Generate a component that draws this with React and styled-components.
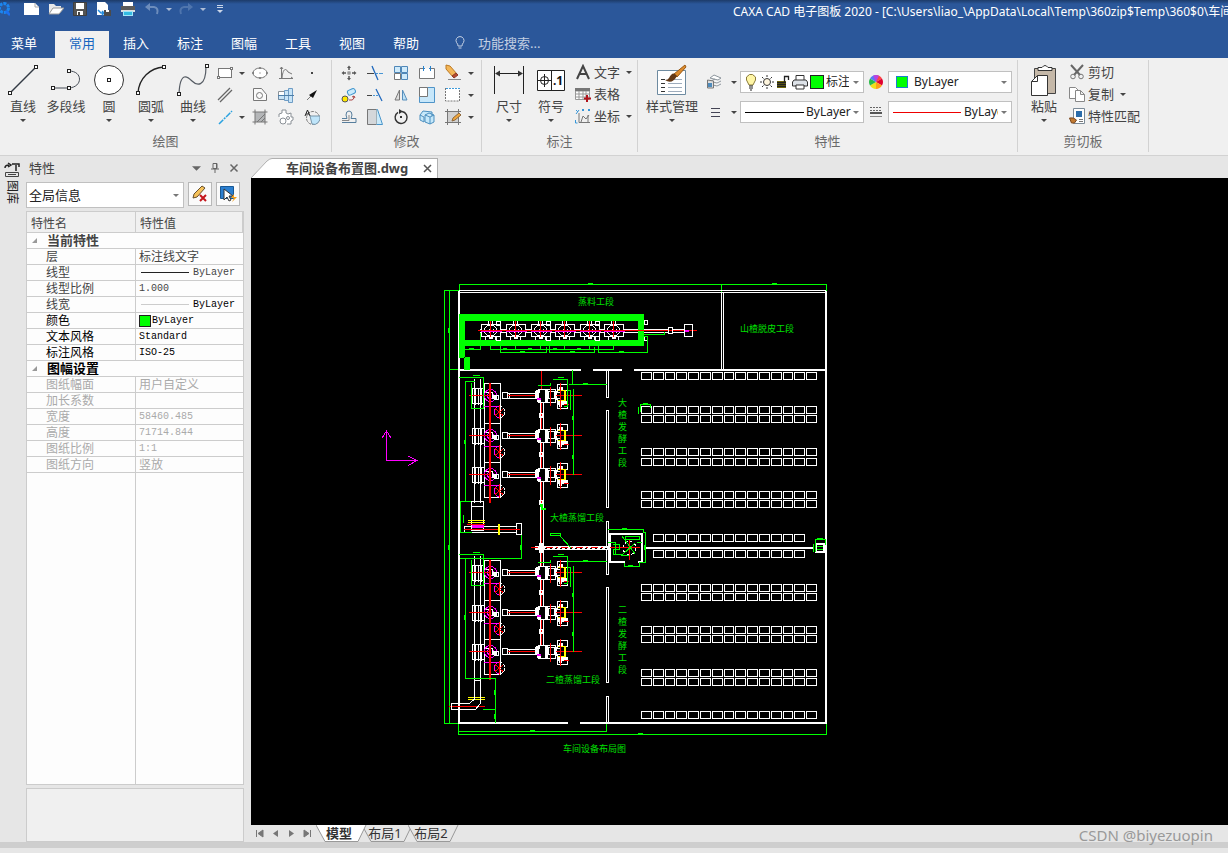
import React from 'react'
import styled, { createGlobalStyle, css } from 'styled-components'

const ui = '"Noto Sans", "Noto Sans CJK SC", sans-serif'
const theme = {
  blue: '#2b579a',
  ribbon: '#f0f0f0',
  chrome: '#e6e6e6',
  line: '#cccccc',
  text: '#444444',
  green: '#00ff00',
  magenta: '#ff00ff'
}

const GlobalStyle = createGlobalStyle`
  * {
    box-sizing: border-box;
  }
  body {
    margin: 0;
    font-family: ${ui};
    font-size: 13px;
    line-height: 16px;
    color: ${theme.text};
    background: ${theme.chrome};
  }
  button, input, select {
    font: inherit;
    color: inherit;
    border: 0;
    padding: 0;
    margin: 0;
    background: transparent;
    border-radius: 0;
  }
  svg {
    display: block;
    flex: none;
  }
`

const Shell = styled.div`
  display: flex;
  flex-direction: column;
  height: 100vh;
  overflow: hidden;
`

/* ---------- title bar and menu ---------- */

const TitleBar = styled.header`
  display: flex;
  justify-content: space-between;
  height: 31px;
  color: #fff;
  overflow: hidden;
  background: linear-gradient(#1d3b69, ${theme.blue} 4px);
`

const QuickBar = styled.div`
  display: flex;
  align-items: center;
  height: 18px;
`

const QuickButton = styled.button`
  display: flex;
  justify-content: center;
  width: ${({ $narrow }) => ($narrow ? 10 : 24)}px;
`

const QuickGap = styled.span`
  width: 10px;
`

const WindowTitle = styled.div`
  flex: 0 0 495px;
  min-width: 0;
  font-size: 12px;
  line-height: 24px;
  white-space: nowrap;
  overflow: hidden;
`

const MenuBar = styled.nav`
  display: flex;
  height: 27px;
  background: ${theme.blue};
  color: #fff;
`

const MenuTab = styled.button`
  width: 54px;
  height: 27px;
  padding-bottom: 4px;
  ${({ $first }) =>
    $first &&
    css`
      width: 48px;
      margin-right: 7px;
    `};
  ${({ $active }) =>
    $active &&
    css`
      color: #1565c0;
      background: ${theme.ribbon};
    `};
`

const Search = styled.label`
  display: flex;
  align-items: center;
  gap: 10px;
  margin-left: 19px;
  padding-bottom: 4px;
`

const SearchInput = styled.input`
  width: 120px;
  outline: none;
  &::placeholder {
    color: #c3cfe2;
    opacity: 1;
  }
`

/* ---------- ribbon ---------- */

const Ribbon = styled.section`
  display: flex;
  height: 98px;
  background: ${theme.ribbon};
  border-bottom: 1px solid #d2d2d2;
`

const Group = styled.div`
  display: flex;
  flex-direction: column;
  justify-content: space-between;
  flex: none;
  width: ${({ $width }) => $width}px;
  margin: 2px 0 3px;
  padding-top: 2px;
  border-right: 1px solid #d2d2d2;
`

const GroupBody = styled.div`
  display: flex;
  padding-left: ${({ $indent }) => $indent || 0}px;
`

const GroupName = styled.div`
  height: 20px;
  line-height: 18px;
  text-align: center;
  color: #6a6a6a;
`

const BigButton = styled.button`
  display: flex;
  flex-direction: column;
  align-items: center;
  width: ${({ $width }) => $width || 42}px;
  height: 64px;
  white-space: nowrap;
`

const BigLabel = styled.span`
  height: 21px;
  line-height: 17px;
`

const IconSlot = styled.span`
  display: flex;
  align-items: center;
  height: 36px;
`

const ToolGrid = styled.div`
  display: grid;
  grid-template-columns: ${({ $columns }) => $columns};
  grid-auto-rows: 22px;
  justify-items: center;
  align-items: center;
`

const ToolButton = styled.button`
  display: flex;
`

const RowButton = styled.button`
  display: flex;
  align-items: center;
  gap: 3px;
  height: 22px;
  padding-bottom: 2px;
  white-space: nowrap;
`

const Stack = styled.div`
  display: flex;
  flex-direction: column;
  align-items: flex-start;
  padding-left: ${({ $indent }) => $indent || 0}px;
`

const ComboGrid = styled.div`
  display: grid;
  grid-template-columns: 28px 12px 124px 24px 124px;
  grid-auto-rows: 22px;
  gap: 8px 0;
  justify-items: center;
  align-items: center;
  padding-top: 9px;
`

const Combo = styled.label`
  display: flex;
  align-items: center;
  gap: ${({ $gap }) => $gap || 0}px;
  width: 100%;
  height: ${({ $tall }) => ($tall ? 26 : 22)}px;
  padding: 0 4px 0 ${({ $tall }) => ($tall ? 2 : 4)}px;
  background: #fff;
  border: 1px solid #c0c0c0;
  color: #222;
  font-size: ${({ $tall }) => ($tall ? 13 : 12)}px;
`

const Select = styled.select`
  appearance: none;
  flex: 1;
  min-width: 0;
  outline: none;
  overflow: hidden;
  text-overflow: clip;
  padding-left: ${({ $pad }) => $pad || 0}px;
`

/* ---------- work area ---------- */

const Work = styled.main`
  display: flex;
  flex: 1;
  min-height: 0;
`

const SideDock = styled.aside`
  flex: 0 0 25px;
  padding: 6px 0 0 4px;
`

const DockTab = styled.button`
  display: flex;
  flex-direction: column;
  align-items: center;
  gap: 2px;
  width: 16px;
  color: #222;
  font-size: 12px;
  line-height: 16px;
`

const Sideways = styled.span`
  writing-mode: vertical-rl;
  text-orientation: sideways;
`

const Panel = styled.section`
  display: flex;
  flex-direction: column;
  flex: 0 0 219px;
`

const PanelTitle = styled.div`
  display: flex;
  align-items: center;
  height: 24px;
  padding: 0 5px 0 4px;
  gap: 9px;
`

const PanelName = styled.h2`
  flex: 1;
  margin: 0;
  font-size: 13px;
  font-weight: 400;
`

const PanelTools = styled.div`
  display: flex;
  gap: 4px;
  padding: 2px 4px 3px 1px;
`

const SquareButton = styled.button`
  display: flex;
  align-items: center;
  justify-content: center;
  flex: 0 0 24px;
  height: 24px;
  background: #fafafa;
  border: 1px solid #b8b8b8;
`

const Sheet = styled.div`
  flex: 1;
  margin-left: 1px;
  border: 1px solid ${theme.line};
  background: linear-gradient(${theme.line}, ${theme.line}) 108px 0 / 1px 100% no-repeat #fdfdfd;
`

const PropTable = styled.table`
  width: 100%;
  table-layout: fixed;
  border-collapse: separate;
  border-spacing: 0;
  font-family: ${ui};
  font-size: 12px;
  line-height: 15px;
`

const HeadCell = styled.th`
  height: 21px;
  width: ${({ $width }) => $width || 'auto'};
  padding: 2px 4px 0;
  text-align: left;
  font-weight: 400;
  background: ${theme.ribbon};
  border: solid ${theme.line};
  border-width: 0 1px 1px 0;
`

const NameCell = styled.th`
  height: 16px;
  padding: 0 0 0 19px;
  text-align: left;
  font-weight: 400;
  color: ${({ $color }) => $color};
  border: solid ${theme.line};
  border-width: 0 1px 1px 0;
`

const ValueCell = styled.td`
  height: 16px;
  padding: 0 0 0 3px;
  color: ${({ $color }) => $color};
  border-bottom: 1px solid ${theme.line};
  ${({ $latin }) =>
    $latin &&
    css`
      font-family: 'Liberation Mono', monospace;
      font-size: 10px;
    `};
`

const Value = styled.div`
  display: flex;
  align-items: center;
  gap: ${({ $gap }) => $gap || 0}px;
  height: 15px;
`

const SectionCell = styled.th`
  height: 16px;
  padding: 0;
  background: #fdfdfd;
  color: ${({ $color }) => $color};
  border-bottom: 1px solid ${theme.line};
`

const SectionTitle = styled.div`
  display: flex;
  align-items: center;
  gap: 10px;
  height: 15px;
  padding-left: 5px;
  font-size: 13px;
`

const Swatch = styled.span`
  flex: none;
  width: ${({ $size }) => $size}px;
  height: ${({ $size }) => $size}px;
  background: ${theme.green};
  border: 1px solid ${({ $edge }) => $edge || '#222'};
`

const Hint = styled.div`
  flex: 0 0 54px;
  margin: 3px 0 0 1px;
  border: 1px solid ${theme.line};
  background: ${theme.ribbon};
`

const Viewer = styled.section`
  display: flex;
  flex-direction: column;
  flex: 1;
  min-width: 0;
  margin-left: 7px;
`

const FileTabs = styled.div`
  display: flex;
  align-items: flex-end;
  flex: 0 0 22px;
`

const FileTab = styled.div`
  display: flex;
  align-items: center;
  gap: 15px;
  height: 20px;
  padding: 0 5px 0 14px;
  background: #fff;
  border: solid #b0b0b0;
  border-width: 1px 1px 0 0;
  font-weight: 700;
  line-height: 17px;
  white-space: nowrap;
`

const Canvas = styled.svg`
  flex: 1;
  width: 100%;
  min-height: 0;
  background: #000;
`

const SheetTabs = styled.div`
  display: flex;
  flex: 0 0 17px;
`

const SheetNav = styled.div`
  display: flex;
  width: 65px;
`

const NavButton = styled.button`
  display: flex;
  align-items: center;
  justify-content: center;
  width: 16px;
`

const SheetTab = styled.button`
  position: relative;
  width: 46px;
  height: 17px;
  line-height: 15px;
  color: #333;
  white-space: nowrap;
  z-index: ${({ $active }) => ($active ? 1 : 0)};
  font-weight: ${({ $active }) => ($active ? 700 : 400)};
`

const TabShape = styled.svg`
  position: absolute;
  left: 0;
  top: 0;
  z-index: -1;
`

const Footer = styled.footer`
  position: relative;
  flex: 0 0 11px;
  background: linear-gradient(#cecece 6px, ${theme.chrome} 6px);
`

const Watermark = styled.div`
  position: absolute;
  right: 15px;
  bottom: 8px;
  font-size: 15px;
  line-height: 20px;
  color: #999;
`

/* ---------- icons ---------- */

const Icon = ({ size = 18, width, children }) => (
  <svg
    width={width || size}
    height={size}
    viewBox={`0 0 ${width || size} ${size}`}
    fill="none"
    stroke="#777"
    aria-hidden="true"
  >
    {children}
  </svg>
)

const Down = ({ fill = '#444', big }) => (
  <svg width={big ? 9 : 6} height={big ? 5 : 3} viewBox="0 0 6 3" aria-hidden="true">
    <path d="M0 0h6l-3 3z" fill={fill} />
  </svg>
)

const Node = ({ x, y }) => (
  <rect x={x - 1.5} y={y - 1.5} width="3" height="3" fill="#fff" stroke="#222" />
)

const icons = {
  line: (
    <Icon size={34}>
      <path d="M4 30L30 4" stroke="#333a44" strokeWidth="1.5" />
      <Node x={4} y={30} />
      <Node x={30} y={4} />
    </Icon>
  ),
  polyline: (
    <Icon size={34}>
      <path d="M4 25h16c14-1 14-17 0-17" stroke="#444b55" />
      <Node x={4} y={25} />
      <Node x={20} y={25} />
      <Node x={20} y={8} />
    </Icon>
  ),
  circle: (
    <Icon size={34}>
      <circle cx="17" cy="17" r="14.5" fill="#fff" stroke="#333" />
      <Node x={17} y={17} />
    </Icon>
  ),
  arc: (
    <Icon size={34}>
      <path d="M4 30C5 15 16 5 30 4" stroke="#222" strokeWidth="1.3" />
      <Node x={4} y={30} />
      <Node x={30} y={4} />
    </Icon>
  ),
  curve: (
    <Icon size={34}>
      <path d="M3 31C4 7 12 14 16 18s14 8 14-15" stroke="#555b63" strokeWidth="1.2" />
      <Node x={3} y={31} />
      <Node x={31} y={3} />
    </Icon>
  ),
  rect: (
    <Icon size={16}>
      <rect x="1.5" y="3.5" width="13" height="9" fill="#fff" />
      <rect x=".5" y="11.5" width="2" height="2" fill="#fff" />
      <rect x="13.5" y="2.5" width="2" height="2" fill="#fff" />
    </Icon>
  ),
  ellipse: (
    <Icon size={16}>
      <ellipse cx="8" cy="8" rx="7" ry="5" fill="#fff" />
      <path d="M7.5 8h1M1 7v2M15 7v2M7 3h2M7 13h2" stroke="#555" />
    </Icon>
  ),
  formula: (
    <Icon size={16}>
      <path d="M3.500 2v12M1 13.500h14M2 4l1.500-2L5 4M13 12l2 1.500" />
      <path d="M4 13C5 3 8 3 10 7t4 2" />
    </Icon>
  ),
  point: (
    <Icon size={16}>
      <path d="M7 8h2" stroke="#444" strokeWidth="2" />
    </Icon>
  ),
  parallel: (
    <Icon size={16}>
      <path d="M1 13L13 1M3 15L15 3" stroke="#666" strokeWidth="1.300" />
    </Icon>
  ),
  hole: (
    <Icon size={16}>
      <path d="M1.500 1.500h8l5 6v6h-13z" fill="#fafafa" />
      <circle cx="7.500" cy="8.500" r="3" />
    </Icon>
  ),
  shaft: (
    <Icon size={16}>
      <path d="M.5 4.500h6v8h-6z" fill="#fff" stroke="#8a9299" />
      <path d="M.5 8.500h6v4h-6z" fill="#c7e4f7" stroke="#6e8ba5" />
      <path d="M6.500 3.500h4v10h-4zM10.500 1.500h4v14h-4z" fill="#c7e4f7" stroke="#6e9cc5" />
      <path d="M0 8.500h16" stroke="#4d7ea8" />
    </Icon>
  ),
  arrow: (
    <Icon size={16}>
      <path d="M3 13l4-4" stroke="#777" />
      <path d="M13 3L5 8l4 3z" fill="#111" stroke="none" />
    </Icon>
  ),
  centerline: (
    <Icon size={16}>
      <path d="M2 15L15 2" stroke="#2aa2e0" strokeWidth="1.500" strokeDasharray="6 1 2 1" />
    </Icon>
  ),
  hatch: (
    <Icon size={16}>
      <path d="M3 3h10v10H3z" fill="#b4b6b8" stroke="none" />
      <path d="M.5 3h15M.5 13h15M3 .5v15M13 .5v15M5 13l8-8M9 13l4-4" stroke="#777" />
    </Icon>
  ),
  gear: (
    <Icon size={16}>
      <path d="M1 8V5l3-1V1h4v3l2 1 3-1v4h2v3l-2 1v3h-4" fill="#fff" stroke="#8a9096" />
      <circle cx="5" cy="12" r="3" fill="#fff" stroke="#8a9096" />
      <circle cx="10" cy="9" r="1.500" stroke="#8a9096" />
    </Icon>
  ),
  block: (
    <Icon size={16}>
      <circle cx="9" cy="9" r="6.500" strokeDasharray="3 1" />
      <path d="M6 7h10a6 7 0 01-8 8z" fill="#bfe5fa" stroke="#7996aa" />
      <path d="M1 7l2.500-6L6 7M2 5h3" stroke="#222" />
    </Icon>
  ),
  move: (
    <Icon size={16}>
      <path d="M8 2v3M8 11v3M2 8h3M11 8h3" stroke="#555" strokeWidth="1.500" />
      <path d="M8 .5L10 3H6zM8 15.500L10 13H6zM.5 8L3 6v4zM15.500 8L13 6v4z" fill="#555" stroke="none" />
      <rect x="7" y="7" width="2" height="2" fill="#fff" />
    </Icon>
  ),
  trim: (
    <Icon size={16}>
      <path d="M0 8.500h7" stroke="#444" />
      <path d="M9 8.500h2M12 8.500h4" stroke="#4896d4" />
      <path d="M5 1l6 14" stroke="#1f68bd" strokeWidth="1.300" />
    </Icon>
  ),
  array: (
    <Icon size={16}>
      <path d="M1.500 1.500h6v6h-6zM8.500 1.500h6v6h-6zM8.500 8.500h6v6h-6z" fill="#cfeafa" stroke="#4f87b8" />
      <path d="M1.500 8.500h6v6h-6z" fill="#fff" stroke="#777" />
    </Icon>
  ),
  breakAt: (
    <Icon size={16}>
      <path d="M4 3.500H.5v10h15v-10H12" fill="#fff" />
      <path d="M4.500 1v5M11.500 1v5M4 3.500h2M12 3.500h-2" stroke="#2882cc" />
    </Icon>
  ),
  erase: (
    <Icon size={18}>
      <path d="M2 1l4 1 7 8-4 3-7-8z" fill="#f3b657" stroke="#bd7a25" />
      <path d="M12 9l2 2-4 3-2-2z" fill="#b64a2e" stroke="#8e3b28" />
      <path d="M4 15.500h13" stroke="#888" />
    </Icon>
  ),
  copyObj: (
    <Icon size={16}>
      <circle cx="4" cy="12" r="3" fill="#ffe800" stroke="#555" />
      <rect x="6.500" y="2.500" width="8" height="5" rx="2" fill="#c9eafb" stroke="#3f95cd" transform="rotate(-25 10 5)" />
      <path d="M8 13h3q2 0 2-4M11 10l2-1 1 2" stroke="#a44" />
    </Icon>
  ),
  extend: (
    <Icon size={16}>
      <path d="M0 8.500h5" stroke="#444" />
      <path d="M6 8.500h5" stroke="#4896d4" strokeDasharray="2 1" />
      <path d="M9 2l6 12" stroke="#1f68bd" strokeWidth="1.300" />
    </Icon>
  ),
  mirror: (
    <Icon size={16}>
      <path d="M6.500 3v10H2z" fill="#ddd" stroke="#777" />
      <path d="M9.500 3v10H14z" fill="#bee2f7" stroke="#568ebc" />
    </Icon>
  ),
  scale: (
    <Icon size={16}>
      <path d="M.5.5h15v15H.5z" fill="#c7e7fa" stroke="#4f94c8" />
      <path d="M.5.5h8v9h-8z" fill="#fff" stroke="#777" />
    </Icon>
  ),
  stretch: (
    <Icon size={16}>
      <path d="M.5 1v13h14V1" fill="#fff" stroke="#777" strokeDasharray="2 1" />
      <path d="M1 1.500h14" stroke="#3e9bda" strokeDasharray="2 1" />
    </Icon>
  ),
  offset: (
    <Icon size={16}>
      <path d="M1 9.500h5L5 6q0-4 3-4t3 4l-1 3.500h5v4H1" stroke="#577e9d" />
      <path d="M1 11.500h7V6" stroke="#888" />
    </Icon>
  ),
  chamfer: (
    <Icon size={16}>
      <path d="M.5.5h9v15h-9z" fill="#d4d7da" />
      <path d="M9.500.5h1l5 15h-6" fill="#cbeafa" stroke="#4995ca" />
    </Icon>
  ),
  rotate: (
    <Icon size={16}>
      <path d="M9 2.500a6 6 0 11-4 .8" stroke="#333" strokeWidth="1.400" />
      <path d="M6 0l4 2.500L6 5zM7 7h2v2H7z" fill="#333" stroke="none" />
    </Icon>
  ),
  explode: (
    <Icon size={16}>
      <path d="M1 6l3-4 9 1v4M1 6v5l4 2V8zM6 6l4-2 5 2v7l-4 2-5-2zM6 6l5 2 4-2M11 8v7" fill="#c6e8fa" stroke="#4b8fbf" />
    </Icon>
  ),
  editHatch: (
    <Icon size={16}>
      <path d="M2.500 2.500h11v11h-11z" fill="#d0d0d0" />
      <path d="M0 2.500h16M0 13.500h16M2.500 0v16M13.500 0v16" />
      <path d="M7 12l1-3 6-5 2 2-6 5z" fill="#f0a63b" stroke="#8d673b" />
    </Icon>
  ),
  dimension: (
    <Icon size={34}>
      <path d="M2.500 3v28M31.500 3v28M4 10.500h26" stroke="#222" />
      <path d="M3 10.500l5-3v6zM31 10.500l-5-3v6z" fill="#333" stroke="none" />
    </Icon>
  ),
  symbol: (
    <Icon size={34}>
      <path d="M3.500 7.500h27v20h-27zM17.500 7v20" fill="#fff" stroke="#222" />
      <circle cx="10.500" cy="17.500" r="4" stroke="#222" />
      <path d="M4 17.500h13M10.500 11v13" stroke="#222" />
      <text x="19" y="22" fontSize="12" fontWeight="700" fill="#111" stroke="none">.1</text>
    </Icon>
  ),
  letterA: (
    <Icon size={16}>
      <path d="M2 15L8 2l6 13M4.500 10h7" stroke="#444" strokeWidth="2" />
    </Icon>
  ),
  table: (
    <Icon size={16}>
      <path d="M.5 2.500h14v11H.5zM.5 5h14M.5 8h14M.5 11h14M4 4v9M8 4v9M11 4v9" fill="#fff" stroke="#999" />
      <path d="M0 2h15v3H0z" fill="#777" stroke="none" />
      <path d="M12 9v7M9 12.500h7" stroke="#b0121b" strokeWidth="2" />
    </Icon>
  ),
  coord: (
    <Icon size={16}>
      <path d="M4 5v9.500h11M6 14l2-6 3 3 3-4M13 14V7" />
      <path d="M1 2l2 2M4 2L1 6M7 1l2 2M9 1L7 3M13 1l2 2M15 1l-2 2M.5 12v3h2" stroke="#3796d8" />
    </Icon>
  ),
  style: (
    <Icon size={36}>
      <path d="M3.500 8.500h28v24h-28z" fill="#fff" stroke="#6d8aa0" />
      <path d="M7 17.500h4M7 21.500h4M7 25.500h4M7 29.500h4" stroke="#333" />
      <path d="M14 17.500h14M14 21.500h14M14 25.500h14M14 29.500h14" stroke="#9eacbc" />
      <path d="M31 3L20 12l3 3 9-10z" fill="#dc8b2d" stroke="#9a5a15" />
      <path d="M21 12q-3-2-6 4-1 2-4 2 7 5 12-4z" fill="#643a18" stroke="none" />
    </Icon>
  ),
  layers: (
    <Icon size={18}>
      <path d="M5 5l4-3 7 3-3 2zM6 8l4-2M8 9l4 1 4-2M8 12l4 1 4-2" fill="#fff" stroke="#8d969d" />
      <path d="M2.500 7v8h6V8z" fill="#ddd" />
      <path d="M3 10h4v4H3z" fill="#4f8bbb" stroke="none" />
    </Icon>
  ),
  lines: (
    <Icon size={18}>
      <path d="M6 5.500h9M6 9.500h9M6 13.500h9" stroke="#445" />
    </Icon>
  ),
  bulb: (
    <Icon size={18} width={12}>
      <path d="M4 12L1.500 7V4l3-2.500h3l3 2.500v3L8 12z" fill="#fff6a6" stroke="#8a7a3a" />
      <path d="M4 13h4M4 15h4M5 17h2" stroke="#222" />
    </Icon>
  ),
  sun: (
    <Icon size={16}>
      <circle cx="8" cy="8" r="3.500" fill="#fff6de" stroke="#333" />
      <path d="M8 1v2M8 13v2M1 8h2M13 8h2M3 3l1.500 1.500M11.500 11.500L13 13M13 3l-1.500 1.500M4.500 11.500L3 13" stroke="#333" />
    </Icon>
  ),
  lock: (
    <Icon size={16} width={13}>
      <path d="M0 7h9v7H0z" fill="#8a8000" stroke="none" />
      <path d="M7.500 8V2.500h4V6M0 8.500h9M0 10.500h9M0 12.500h9" stroke="#222" strokeWidth="1.300" />
    </Icon>
  ),
  print: (
    <Icon size={16}>
      <path d="M4 6V1.500h8V6" fill="#fff" stroke="#333" />
      <path d="M2 6h12l1.500 2v4H.5V8z" fill="#dde2e8" stroke="#333" />
      <path d="M4 11h8v4H4z" fill="#fff" stroke="#333" />
    </Icon>
  ),
  wheel: (
    <Icon size={16}>
      <g stroke="none">
        <path d="M8 8V1a7 7 0 016 3.500z" fill="#f44" />
        <path d="M8 8l6-3.500a7 7 0 010 7z" fill="#e00030" />
        <path d="M8 8l6 3.500A7 7 0 018 15z" fill="#ff9e16" />
        <path d="M8 8v7a7 7 0 01-6-3.500z" fill="#f0df1b" />
        <path d="M8 8l-6 3.500a7 7 0 010-7z" fill="#28ba48" />
        <path d="M8 8L2 4.500A7 7 0 018 1z" fill="#557df5" />
        <path d="M8 8L5 1.700A7 7 0 0111 1.700z" fill="#b943e0" />
      </g>
    </Icon>
  ),
  weights: (
    <Icon size={16}>
      <path d="M2 3.500h12M2 6.500h12" stroke="#666" strokeDasharray="2 1" />
      <path d="M2 9h12" stroke="#555" strokeWidth="2" />
      <path d="M2 12.500h12" stroke="#888" />
    </Icon>
  ),
  paste: (
    <Icon size={34} width={30}>
      <path d="M5.500 5.500h21v25h-21z" fill="#c5b8a8" stroke="#444" />
      <path d="M9 7.500V4.500h4q3-4 6 0h4v3z" fill="#fff" stroke="#333" />
      <path d="M2.500 18.500l6-6h10v20h-16z" fill="#fff" stroke="#333" />
      <path d="M8.500 12.500v6h-6" stroke="#333" />
    </Icon>
  ),
  cut: (
    <Icon size={16}>
      <path d="M2 1l9 10M14 1L5 11" stroke="#666" strokeWidth="2" />
      <circle cx="4" cy="12.500" r="2.300" />
      <circle cx="12" cy="12.500" r="2.300" />
    </Icon>
  ),
  copy: (
    <Icon size={16}>
      <path d="M.5 1.500h6l3 3v8h-9z" fill="#fff" stroke="#888" />
      <path d="M6.500 4.500h5l4 4v7h-9zM11.500 4.500v4h4" fill="#fff" stroke="#888" />
    </Icon>
  ),
  match: (
    <Icon size={16}>
      <path d="M4.500.5h11v15h-11z" fill="#fff" stroke="#7c8b98" />
      <path d="M7 3h6v6H7z" fill="#2c6dab" stroke="none" />
      <path d="M10 11.500h4M10 13.500h4" />
      <path d="M.5 10q4-1 7 2l-2 3h-3z" fill="#c27b32" stroke="#7b4820" />
    </Icon>
  )
}

const QuickIcons = () => (
  <>
    <QuickButton aria-label="CAXA" $narrow>
      <Icon size={16} width={10}>
        <circle cx="4" cy="7" r="4.500" stroke="#1b86f0" strokeWidth="3" strokeDasharray="3 1" />
        <path d="M6 10l4 4" stroke="#1d6ff0" strokeWidth="2.500" />
      </Icon>
    </QuickButton>
    <QuickGap />
    <QuickButton aria-label="新建">
      <Icon size={16}>
        <path d="M0 2h11l4 4v8H0z" fill="#fff" stroke="none" />
        <path d="M11 2v4h4" stroke="#aaa" />
      </Icon>
    </QuickButton>
    <QuickButton aria-label="打开">
      <Icon size={16}>
        <path d="M1 3h5l2 2h5v3L4 13H1z" fill="#e9e9e9" stroke="none" />
        <path d="M1 13l4-6h11l-5 6z" fill="#fff" stroke="#999" />
      </Icon>
    </QuickButton>
    <QuickButton aria-label="保存">
      <Icon size={16}>
        <path d="M1.500 1.500h13v13h-13z" fill="#545454" stroke="#3f3f3f" />
        <path d="M4 2h8v6H4zM5 10h6v4H5z" fill="#fff" stroke="none" />
        <path d="M6 11h2v3H6z" fill="#444" stroke="none" />
      </Icon>
    </QuickButton>
    <QuickButton aria-label="另存为">
      <Icon size={16}>
        <path d="M1 1h8l3 3v10H1z" fill="#fff" stroke="none" />
        <path d="M2 9l3 3h3M6 10l2 2-2 2" stroke="#268de0" strokeWidth="1.500" />
        <path d="M8 9h7v6H8z" fill="#4b4b4b" stroke="none" />
        <path d="M10 9h3v2h-3z" fill="#fff" stroke="none" />
      </Icon>
    </QuickButton>
    <QuickButton aria-label="打印">
      <Icon size={16}>
        <path d="M3 1h10v5H3z" fill="#fff" stroke="none" />
        <path d="M1 5h14v6H1z" fill="#5a5a5a" stroke="none" />
        <path d="M1 9h14v2H1z" fill="#ddd" stroke="none" />
        <path d="M3 10h10v5H3z" fill="#a2e4f7" stroke="none" />
        <path d="M4 11h8v3H4z" fill="#32bae2" stroke="none" />
      </Icon>
    </QuickButton>
    <QuickButton aria-label="撤销">
      <Icon size={16}>
        <path d="M3 6h7q5 1 3 7" stroke="#6d8dbc" strokeWidth="2" />
        <path d="M1 6l5-4v8z" fill="#6d8dbc" stroke="none" />
      </Icon>
    </QuickButton>
    <QuickButton aria-label="撤销列表" $narrow>
      <Down fill="#aebdd6" />
    </QuickButton>
    <QuickButton aria-label="重做">
      <Icon size={16}>
        <path d="M13 6H6Q1 7 3 13" stroke="#4f75ad" strokeWidth="2" />
        <path d="M15 6l-5-4v8z" fill="#4f75ad" stroke="none" />
      </Icon>
    </QuickButton>
    <QuickButton aria-label="重做列表" $narrow>
      <Down fill="#aebdd6" />
    </QuickButton>
    <QuickButton aria-label="自定义">
      <Icon size={8}>
        <path d="M1 .5h6M1 2.500h6" stroke="#cbd6e8" />
        <path d="M1 5h6L4 8z" fill="#cbd6e8" stroke="none" />
      </Icon>
    </QuickButton>
  </>
)

/* ---------- ribbon content ---------- */

const menus = ['菜单', '常用', '插入', '标注', '图幅', '工具', '视图', '帮助']

const drawTools = [
  ['rect', '矩形'], 'more', ['ellipse', '椭圆'], ['formula', '公式曲线'], ['point', '点'],
  ['parallel', '平行线'], null, ['hole', '孔'], ['shaft', '轴'], ['arrow', '箭头'],
  ['centerline', '中心线'], 'more', ['hatch', '剖面线'], ['gear', '齿轮'], ['block', '块']
]

const editTools = [
  ['move', '平移'], ['trim', '裁剪'], ['array', '阵列'], ['breakAt', '打断'], ['erase', '删除'], 'more',
  ['copyObj', '平移复制'], ['extend', '延伸'], ['mirror', '镜像'], ['scale', '缩放'], ['stretch', '拉伸'], 'more',
  ['offset', '等距线'], ['chamfer', '过渡'], ['rotate', '旋转'], ['explode', '分解'], ['editHatch', '编辑填充'], 'more'
]

const Big = ({ icon, label, width, plain }) => (
  <BigButton $width={width}>
    <IconSlot>{icons[icon]}</IconSlot>
    <BigLabel>{label}</BigLabel>
    {!plain && <Down />}
  </BigButton>
)

const Tools = ({ columns, items }) => (
  <ToolGrid $columns={columns}>
    {items.map((item, i) => {
      if (!item) return <span key={i} />
      if (item === 'more') {
        return (
          <ToolButton key={i} aria-label="更多">
            <Down />
          </ToolButton>
        )
      }
      return (
        <ToolButton key={i} aria-label={item[1]}>
          {icons[item[0]]}
        </ToolButton>
      )
    })}
  </ToolGrid>
)

const Row = ({ icon, label, more }) => (
  <RowButton>
    {icons[icon]}
    {label}
    {more && (
      <>
        <span />
        <Down />
      </>
    )}
  </RowButton>
)

const RibbonBar = () => (
  <Ribbon>
    <Group $width={332}>
      <GroupBody $indent={2}>
        <Big icon="line" label="直线" />
        <Big icon="polyline" label="多段线" width={44} plain />
        <Big icon="circle" label="圆" />
        <Big icon="arc" label="圆弧" />
        <Big icon="curve" label="曲线" />
        <Tools columns="22px 11px 26px 26px 26px" items={drawTools} />
      </GroupBody>
      <GroupName>绘图</GroupName>
    </Group>
    <Group $width={150}>
      <GroupBody $indent={4}>
        <Tools columns="repeat(5, 26px) 10px" items={editTools} />
      </GroupBody>
      <GroupName>修改</GroupName>
    </Group>
    <Group $width={156}>
      <GroupBody $indent={6}>
        <Big icon="dimension" label="尺寸" />
        <Big icon="symbol" label="符号" />
        <Stack $indent={3}>
          <Row icon="letterA" label="文字" more />
          <Row icon="table" label="表格" />
          <Row icon="coord" label="坐标" more />
        </Stack>
      </GroupBody>
      <GroupName>标注</GroupName>
    </Group>
    <Group $width={380}>
      <GroupBody $indent={6}>
        <Big icon="style" label="样式管理" width={56} />
        <ComboGrid>
          {icons.layers}
          <Down />
          <Combo $gap={2}>
            {icons.bulb}
            {icons.sun}
            {icons.lock}
            {icons.print}
            <Swatch $size={14} />
            <Select aria-label="图层">
              <option>标注线文字</option>
            </Select>
            <span />
            <Down fill="#777" />
          </Combo>
          {icons.wheel}
          <Combo $gap={3}>
            <span />
            <Swatch $size={12} $edge="#1a7fd0" />
            <Select aria-label="颜色" $pad={3}>
              <option>ByLayer</option>
            </Select>
            <Down fill="#777" />
          </Combo>
          {icons.lines}
          <Down />
          <Combo $gap={2}>
            <svg width="59" height="1">
              <path d="M0 .5h59" stroke="#000" />
            </svg>
            <Select aria-label="线型">
              <option>ByLayer</option>
            </Select>
            <Down fill="#777" />
          </Combo>
          {icons.weights}
          <Combo $gap={3}>
            <svg width="68" height="1">
              <path d="M0 .5h68" stroke="#e00" />
            </svg>
            <Select aria-label="线宽">
              <option>ByLayer</option>
            </Select>
            <Down fill="#777" />
          </Combo>
        </ComboGrid>
      </GroupBody>
      <GroupName>特性</GroupName>
    </Group>
    <Group $width={131}>
      <GroupBody $indent={5}>
        <Big icon="paste" label="粘贴" />
        <Stack $indent={4}>
          <Row icon="cut" label="剪切" />
          <Row icon="copy" label="复制" more />
          <Row icon="match" label="特性匹配" />
        </Stack>
      </GroupBody>
      <GroupName>剪切板</GroupName>
    </Group>
  </Ribbon>
)

/* ---------- property panel ---------- */

const properties = [
  {
    title: '当前特性',
    color: '#444',
    rows: [
      { name: '层', value: '标注线文字' },
      { name: '线型', value: 'ByLayer', line: '#222', latin: true },
      { name: '线型比例', value: '1.000', latin: true },
      { name: '线宽', value: 'ByLayer', line: '#ccc', valueColor: '#000', latin: true },
      { name: '颜色', value: 'ByLayer', swatch: true, color: '#000', latin: true },
      { name: '文本风格', value: 'Standard', color: '#000', latin: true },
      { name: '标注风格', value: 'ISO-25', color: '#000', latin: true }
    ]
  },
  {
    title: '图幅设置',
    color: '#000',
    rows: [
      { name: '图纸幅面', value: '用户自定义', color: '#aaa' },
      { name: '加长系数', value: '', color: '#aaa' },
      { name: '宽度', value: '58460.485', color: '#aaa', latin: true },
      { name: '高度', value: '71714.844', color: '#aaa', latin: true },
      { name: '图纸比例', value: '1:1', color: '#aaa', latin: true },
      { name: '图纸方向', value: '竖放', color: '#aaa' }
    ]
  }
]

const PropertyPanel = () => (
  <Panel>
    <PanelTitle>
      <PanelName>特性</PanelName>
      <Down fill="#666" big />
      <Icon size={12} width={10}>
        <path d="M3 1.500h4v5H3zM1 7h8M5 7v4M6.500 2v5" stroke="#666" />
      </Icon>
      <Icon size={10}>
        <path d="M1.500 1.500l7 7M8.500 1.500l-7 7" stroke="#666" strokeWidth="1.500" />
      </Icon>
    </PanelTitle>
    <PanelTools>
      <Combo $tall>
        <Select aria-label="选择对象">
          <option>全局信息</option>
        </Select>
        <Down fill="#777" />
      </Combo>
      <SquareButton aria-label="清除">
        <Icon size={18}>
          <path d="M2 13l1-4 8-8 3 2-8 9z" fill="#f6c25a" stroke="#66502d" />
          <path d="M9 10l6 6M15 10l-6 6" stroke="#c4161c" strokeWidth="2" />
        </Icon>
      </SquareButton>
      <SquareButton aria-label="快速选择">
        <Icon size={18}>
          <path d="M1.500 1.500h13v12h-13z" fill="#2b7fd0" stroke="#185894" />
          <path d="M5 4v11l3-3 2 4 2-1-2-4h4z" fill="#fff" stroke="#333" />
          <path d="M15 9l-3 4h3l-2 4 5-5h-3z" fill="#f6a11a" stroke="none" />
        </Icon>
      </SquareButton>
    </PanelTools>
    <Sheet>
      <PropTable>
        <thead>
          <tr>
            <HeadCell $width="109px">特性名</HeadCell>
            <HeadCell>特性值</HeadCell>
          </tr>
        </thead>
        {properties.map(section => (
          <tbody key={section.title}>
            <tr>
              <SectionCell colSpan={2} $color={section.color}>
                <SectionTitle>
                  <svg width="5" height="5">
                    <path d="M5 0v5H0z" fill="#999" />
                  </svg>
                  {section.title}
                </SectionTitle>
              </SectionCell>
            </tr>
            {section.rows.map(row => (
              <tr key={row.name}>
                <NameCell $color={row.color || theme.text}>{row.name}</NameCell>
                <ValueCell $color={row.valueColor || row.color || theme.text} $latin={row.latin}>
                  <Value $gap={row.line ? 4 : 1}>
                    {row.line && (
                      <svg width="50" height="1">
                        <path d="M2 .5h48" stroke={row.line} />
                      </svg>
                    )}
                    {row.swatch && <Swatch $size={12} />}
                    {row.value}
                  </Value>
                </ValueCell>
              </tr>
            ))}
          </tbody>
        ))}
      </PropTable>
    </Sheet>
    <Hint />
  </Panel>
)

/* ---------- floor plan ---------- */

const W = '#fff'
const G = theme.green
const R = '#ff0000'
const M = theme.magenta
const Y = '#ffff00'

const Stroke = ({ d, c = W, w = 1, dash }) => (
  <path d={d} stroke={c} strokeWidth={w} strokeDasharray={dash} fill="none" />
)

const Box = ({ x, y, w, h, c = W, fill = 'none', sw = 1 }) => (
  <rect x={x} y={y} width={w} height={h} stroke={c} strokeWidth={sw} fill={fill} />
)

const Note = ({ x, y, children }) => (
  <text x={x} y={y} fill="#00e000" fontSize="9" fontFamily="Noto Sans CJK SC, sans-serif">
    {children}
  </text>
)

const Column = ({ x, y, text }) =>
  text.split('').map((char, i) => (
    <Note key={i} x={x} y={y + i * 12}>
      {char}
    </Note>
  ))

const Cookers = () => (
  <>
    <path d="M459 314h185v32H459zM465 321v19h173v-19zM459 346h6v12h-6zM464 357h6v13h-6z" fill={G} fillRule="evenodd" />
    <Stroke d="M480 329.500h158M480 332.500h158" />
    {[490.5, 515.5, 540.5, 564.5, 589.5, 613.5].map((x, i) => (
      <g key={x}>
        <Box x={x - 9} y={324.5} w={19} h={12} fill="#000" />
        <Stroke d={`M${x - 3} 325.500h6l3 3v4l-3 3h-6l-3-3v-4zM${x - 2} 321v4h4v-4M${x - 5} 337v3M${x + 5} 337v3`} />
        <path d={`M${x - 2} 335h4v4h-4z`} fill={W} />
        <Stroke d={`M${x} 321v16`} c={R} />
        <Stroke d={`M${x - 10} 331h21`} c={M} w={2} />
        <path d={`M${x - 2} 329h1v1h-1zM${x + 2} 329h1v1h-1zM${x - 2} 332h1v1h-1zM${x + 2} 332h1v1h-1z`} fill={W} />
        {i % 2 === 0 && (
          <>
            <Box x={x + 6} y={321.5} w={4} h={4} />
            <Box x={x + 6} y={336.5} w={4} h={4} />
          </>
        )}
        <Stroke d={`M${x} 345v5`} c={G} />
      </g>
    ))}
    <Stroke d="M478 330.500h219" c={R} />
    <Stroke d="M644 329.500h24M644 332.500h24M673 329.500h11M673 332.500h11" />
    <Box x={668.5} y={327.5} w={4} h={6} />
    <Box x={684.5} y={324.5} w={8} h={12} />
    <Stroke d="M685 331h4" c={M} w={2} />
    <Box x={644.5} y={320.5} w={3} h={4} />
    <Box x={644.5} y={336.5} w={3} h={4} />
    <Stroke
      d="M465 349.500h15v-17M491 349.500h123M500 346v6.500h46v-6M549 346v6.500h45v-6M598 346v6.500h49.500v-16h-4M644 334.500h20v-3M469 348.500h5M503 348.500h4M528 348.500h4M553 348.500h4M577 348.500h4M520 351.500h5M570 351.500h5M619 351.500h5"
      c={G}
    />
  </>
)

const Still = ({ y }) => (
  <g>
    <Box x={472} y={y - 7} w={12} h={15} />
    <Stroke d={`M475.500 ${y - 8}v17M478.500 ${y - 8}v17M481.500 ${y - 8}v17M484 ${y - 4}h3M484 ${y + 4}h3`} />
    <circle cx="490.500" cy={y} r="6" stroke={M} fill="none" />
    <circle cx="490.500" cy={y} r="3" stroke={M} fill="none" />
    <Stroke d={`M486 ${y - 3}h6v3h6v4h-4`} />
    <path d={`M492 ${y}h5v3h-5z`} fill={W} />
    <Stroke d={`M484 ${y + 11}h16`} c={M} />
    <path d={`M499.500 ${y + 11}a5 5 0 000 11`} stroke={M} fill="none" />
    <path d={`M499.500 ${y + 11}a5 5 0 010 11`} stroke={W} fill="none" strokeDasharray="3 1" />
    <Stroke d={`M495 ${y + 13}l8 7M495 ${y + 20}l8-6M499.500 ${y + 9}v14`} c={R} />
    <Box x={502.5} y={y - 3} w={5} h={6} />
    <Stroke d={`M508 ${y - 2}h29M508 ${y + 3}h29M509.500 ${y - 3}v6`} />
    <Stroke d={`M469 ${y}h20M508 ${y}h31M555 ${y}h27`} c={R} />
    <Box x={538.5} y={y - 6} w={17} h={13} fill="#000" />
    <path d={`M536 ${y - 5.5}h4v3h-2v6h3v3h-4v-3h-2v-7zM545 ${y - 6.5}h3v14h-3z`} fill={W} />
    <Box x={548.5} y={y - 4} w={6} h={7} />
    <Stroke d={`M556 ${y - 3}l3-3M556 ${y + 3}l3 3`} />
    <Stroke d={`M550.500 ${y - 9}v19`} c={R} />
    <Box x={557.5} y={y - 11} w={10} h={6} />
    <Box x={557.5} y={y + 6} w={10} h={7} />
    <path d={`M559 ${y - 8.5}h4v4h-4zM558 ${y + 6.5}h10v3h-6v2h-3z`} fill={W} />
    <Stroke d={`M558 ${y - 5}h7v10h-7`} c={Y} />
    <Stroke d={`M565 ${y - 5.5}v11`} c={Y} w={2} />
    <Box x={556.5} y={y - 3} w={4} h={6} />
    <Stroke d={`M560.500 ${y - 13}v27M556 ${y}h6M564 ${y + 9}h5`} c={R} />
    <path d={`M537 ${y + 2.5}h4v2h-4z`} fill={M} />
  </g>
)

const Bank = ({ y }) => (
  <g>
    <Box x={484.5} y={y - 12} w={16} h={114} />
    <Stroke d={`M484 ${y + 28}h16M484 ${y + 67}h16`} />
    <Stroke d={`M474.500 ${y - 17}v124M480.500 ${y - 17}v124`} />
    <Still y={y} />
    <Still y={y + 40} />
    <Still y={y + 79} />
    <Stroke d={`M490 ${y - 13}v120`} c={R} w={2} />
    <Stroke
      d={`M459 ${y - 18}h24v31h-12v-26M473 ${y - 20}h7M538 ${y - 10}h12v-3M553 ${y - 16}h14v27h-3M558 ${y - 18}h6M569 ${y - 11}h38M583 ${y - 12}h5M567 ${y - 5}h3v19M573.500 ${y - 7}v86M572 ${y + 20}v4M572 ${y + 59}v4`}
      c={G}
    />
  </g>
)

const benchRows = [
  [372.5, 0, 15], [406.5, 0, 15], [415.5, 0, 15], [448.5, 0, 15], [458.5, 0, 15],
  [491.5, 0, 15], [500.5, 0, 15], [534.5, 1, 13], [550.5, 1, 13], [584.5, 0, 15],
  [593.5, 0, 15], [626.5, 0, 15], [635.5, 0, 15], [669.5, 0, 15], [678.5, 0, 15], [711.5, 0, 15]
]

const benchX = i => Math.round(i * 11.8) + 641.5

const Benches = () =>
  benchRows.map(([y, first, count]) => (
    <g key={y}>
      {Array.from({ length: count }, (_, i) => first + i).map(i => (
        <Box key={i} x={benchX(i)} y={y} w={benchX(i + 1) - benchX(i) - 2} h={7} />
      ))}
    </g>
  ))

const FloorPlan = () => (
  <Canvas role="img" aria-label="车间设备布局图">
    <g transform="translate(-251 -178)" shapeRendering="crispEdges">
      <Stroke d="M386.500 460.500v-29M382 438l4.500-7 4.500 7M386.500 460.500h30M408 456l9 4.500-9 5" c={M} />

      {/* outline dimensions */}
      <Stroke
        d="M459.500 291v-6.500h367v7M721.500 284v9M444.500 723.500v-433h14M449.500 290v433M444 723.500h14M458.500 723v11.500h368V722M458.500 731.500h148V723M588 283.500h5M772 283.500h5M530 730.500h5M638 733.500h5M448.500 328v5M448.500 545v5M449 369.500h10"
        c={G}
      />

      {/* walls */}
      <Stroke d="M459 290.500h367M459 292.500h367M721.500 292v77M723.500 292v77" />
      <Stroke d="M459 291v432M826 291v432M458 370h123M593 370h29M634 370h193M458 723h110M580 723h247" w={2} />
      <Box x={606.5} y={370.5} w={2} h={27} />
      <Box x={606.5} y={410.5} w={2} h={97} />
      <Box x={606.5} y={521.5} w={2} h={53} />
      <Box x={606.5} y={587.5} w={2} h={95} />
      <Box x={606.5} y={696.5} w={2} h={26} />

      <Cookers />
      <Benches />

      {/* main shaft */}
      <Stroke d="M540.500 396v256M543.500 396v256" />
      <Stroke d="M541.500 371v288" c={R} />
      <Bank y={395.5} />
      <Bank y={572.5} />
      {[415, 454, 502, 547, 592, 631].map(y => (
        <g key={y}>
          <rect x="539" y={y - 2} width="5" height="5" fill={W} />
          <rect x="541" y={y - 1} width="1" height="2" fill={R} />
        </g>
      ))}
      <path d="M540 504h3v4h3v2h-5z" fill={G} />

      {/* ducts on the left wall */}
      <Stroke d="M471.500 501.500h12v29h-12zM471 506.500h12M464.500 526.500h52v6h-52zM516.500 523.500h5v11h-5z" />
      <Stroke d="M464 529.500h56M467 524.500h18M449 706.500h36" c={R} />
      <Stroke d="M468 520.500h17M468 522.500h17M468 697.500h17M468 699.500h17" c={Y} />
      <Stroke d="M499 524v11" c={Y} w={2} />
      <path d="M472 525h12v3h-12z" fill={M} />
      <Stroke d="M474.500 679v20l-5 4.500h-18v6h24l5-6V679M474 680.500h6" />
      <Stroke
        d="M465.500 501V381.500h9M471 501.500h-10.500v31h11M463.500 515v8M521.500 535v23.500h-62M572.500 370v14M465.500 559v119.500h30V723M483 709.500h12M464.500 440v4M464.500 615v5M494.500 690v5M494.500 714v5M520.500 545v5M568 561.500h39"
        c={G}
      />

      {/* conveyor */}
      <Stroke d="M535 548h75" w={4} />
      <Stroke d="M545 548h65" c="#000" dash="2 3" />
      <Stroke d="M531 547.500h75" c={R} dash="7 3 2 3" />
      <Box x={539.5} y={543.5} w={4} h={9} fill={W} />
      <Stroke d="M550 535.500v-2h10v2zM560 536l11 12" c={G} />
      <Stroke d="M645 548h168" w={2} />
      <Stroke d="M609 534h33v28h-4M610 534v28h15" w={2} />
      <circle cx="629.500" cy="548" r="6.500" fill="none" stroke={W} strokeDasharray="3 2" />
      <Stroke d="M610 547.500h30M629.500 540v20" c={R} />
      <Stroke
        d="M608 529.500h35v3h2.500v30h-6v4h-15v-4M622 528.500h5M625.500 536.500h14v3h-14zM622 536l13 18M635 543l-13 12h7M612.500 544.500h7v5h-6v5h8M615.500 542v12M608 542.500h8M644 545v5M637 542.500h5M628 565.500h5"
        c={G}
      />
      <Box x={816} y={544} w={8} h={8} sw={2} />
      <Stroke d="M813.500 552v-8M815.500 552v-12.500h10v5M817 538.500h6M817 546.500h6M817 549.500h6" c={G} />
      <Stroke d="M638.500 414v-7M640.500 412v-7.500h10v3M643 403.500h5" c={G} />
    </g>
    <g transform="translate(-251 -178)">
      <Note x={578} y={305}>蒸料工段</Note>
      <Note x={740} y={332}>山楂脱皮工段</Note>
      <Column x={618} y={406} text="大楂发酵工段" />
      <Column x={618} y={613} text="二楂发酵工段" />
      <Note x={550} y={521}>大楂蒸馏工段</Note>
      <Note x={546} y={683}>二楂蒸馏工段</Note>
      <Note x={563} y={752}>车间设备布局图</Note>
    </g>
  </Canvas>
)

const navButtons = [
  ['首页', 'M1.5 1v7M8 1v7L3 4.5z', true],
  ['上一页', 'M7 1v7L2 4.5z', false],
  ['下一页', 'M2 1v7l5-3.5z', false],
  ['末页', 'M7.5 1v7M1 1v7l5-3.5z', true]
]

const sheets = ['模型', '布局1', '布局2']

const App = () => (
  <Shell>
    <GlobalStyle />
    <TitleBar>
      <QuickBar>
        <QuickIcons />
      </QuickBar>
      <WindowTitle>
        CAXA CAD 电子图板 2020 - [C:\Users\liao_\AppData\Local\Temp\360zip$Temp\360$0\车间设
      </WindowTitle>
    </TitleBar>
    <MenuBar>
      {menus.map((name, i) => (
        <MenuTab key={name} $first={i === 0} $active={name === '常用'}>
          {name}
        </MenuTab>
      ))}
      <Search>
        <Icon size={14} width={16}>
          <path d="M6 10q0-2-1.500-3.500a4 4 0 117 0Q10 8 10 10zM6.500 12h3" stroke="#c3cfe2" />
        </Icon>
        <SearchInput aria-label="功能搜索" placeholder="功能搜索..." />
      </Search>
    </MenuBar>
    <RibbonBar />
    <Work>
      <SideDock>
        <DockTab>
          <Icon size={16}>
            <path d="M1 6q0-3 4-3M4 1l3 2-3 2M8 2h7v3M12 3v6" stroke="#222" strokeWidth="1.500" />
            <path d="M1.500 10.500h13v4h-13zM4 12.500h8" stroke="#444" />
          </Icon>
          <Sideways>图库</Sideways>
        </DockTab>
      </SideDock>
      <PropertyPanel />
      <Viewer>
        <FileTabs>
          <svg width="21" height="20">
            <path d="M0 20L16 3q3-2.500 5-2.500V20z" fill="#fff" />
            <path d="M0 20L16 3q3-2.500 5-2.500" fill="none" stroke="#b0b0b0" />
          </svg>
          <FileTab>
            车间设备布置图.dwg
            <Icon size={9}>
              <path d="M1 1l7 7M8 1L1 8" stroke="#555" strokeWidth="1.500" />
            </Icon>
          </FileTab>
        </FileTabs>
        <FloorPlan />
        <SheetTabs>
          <SheetNav>
            {navButtons.map(([label, d, bar]) => (
              <NavButton key={label} aria-label={label}>
                <svg width="9" height="9">
                  <path d={d} fill="#777" stroke={bar ? '#777' : 'none'} />
                </svg>
              </NavButton>
            ))}
          </SheetNav>
          {sheets.map((name, i) => (
            <SheetTab key={name} $active={i === 0}>
              <TabShape width="51" height="17">
                <path
                  d="M0 0l9 16.500h33L50 0"
                  fill={i === 0 ? '#fff' : theme.chrome}
                  stroke="#999"
                />
              </TabShape>
              {name}
            </SheetTab>
          ))}
        </SheetTabs>
      </Viewer>
    </Work>
    <Footer>
      <Watermark>CSDN @biyezuopin</Watermark>
    </Footer>
  </Shell>
)

export default App
